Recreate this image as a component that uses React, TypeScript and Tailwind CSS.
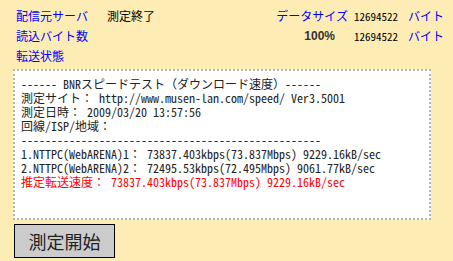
import React from 'react';

const gothic = { fontFamily: '"Noto Sans CJK JP", sans-serif' };

const lines = [
  '------ BNRスピードテスト（ダウンロード速度）------',
  '測定サイト： http://www.musen-lan.com/speed/ Ver3.5001',
  '測定日時： 2009/03/20 13:57:56',
  '回線/ISP/地域：',
  '--------------------------------------------------',
  '1.NTTPC(WebARENA)1： 73837.403kbps(73.837Mbps) 9229.16kB/sec',
  '2.NTTPC(WebARENA)2： 72495.53kbps(72.495Mbps) 9061.77kB/sec',
];

const App = () => {
  return (
    <div className="w-[453px] h-[261px] bg-[#fdecb4] overflow-hidden" style={gothic}>
      {/* Status table */}
      <div className="grid grid-cols-[91px_161px_80px_60px_1fr] grid-rows-[20px_20px_20px] items-center pl-[16px] pt-[6px] text-[12px] leading-[20px]">
        <span className="text-[#0000ff]">配信元サーバ</span>
        <span className="text-black">測定終了</span>
        <span className="text-[#0000ff] text-right">データサイズ</span>
        <span className="pl-[6px] text-black text-[11px] font-['Noto_Sans_Mono_CJK_JP','Liberation_Mono',monospace]">12694522</span>
        <span className="text-[#0000ff]">バイト</span>

        <span className="text-[#0000ff]">読込バイト数</span>
        <span></span>
        <span className="text-right pr-[13px] font-bold text-[#333] font-['Liberation_Sans',sans-serif]">100%</span>
        <span className="pl-[6px] text-black text-[11px] font-['Noto_Sans_Mono_CJK_JP','Liberation_Mono',monospace]">12694522</span>
        <span className="text-[#0000ff]">バイト</span>

        <span className="text-[#0000ff]">転送状態</span>
      </div>

      {/* Result log */}
      <div className="ml-[13px] mt-[3px] w-[418px] h-[151px] bg-white border-2 border-dotted border-[#b4b4b4] px-[6px] py-[6px] text-[12px] leading-[14px] font-['Noto_Sans_Mono_CJK_JP','Liberation_Mono',monospace] whitespace-pre text-[#222]">
        {lines.map((l, i) => (
          <div key={i}>{l}</div>
        ))}
        <div className="text-[#ff0000]">推定転送速度： 73837.403kbps(73.837Mbps) 9229.16kB/sec</div>
      </div>

      {/* Start button */}
      <button className="ml-[14px] mt-[4px] w-[101px] h-[34px] bg-[#cccccc] border border-black text-[18px] text-[#222] leading-none">
        測定開始
      </button>
    </div>
  );
};

export default App;
